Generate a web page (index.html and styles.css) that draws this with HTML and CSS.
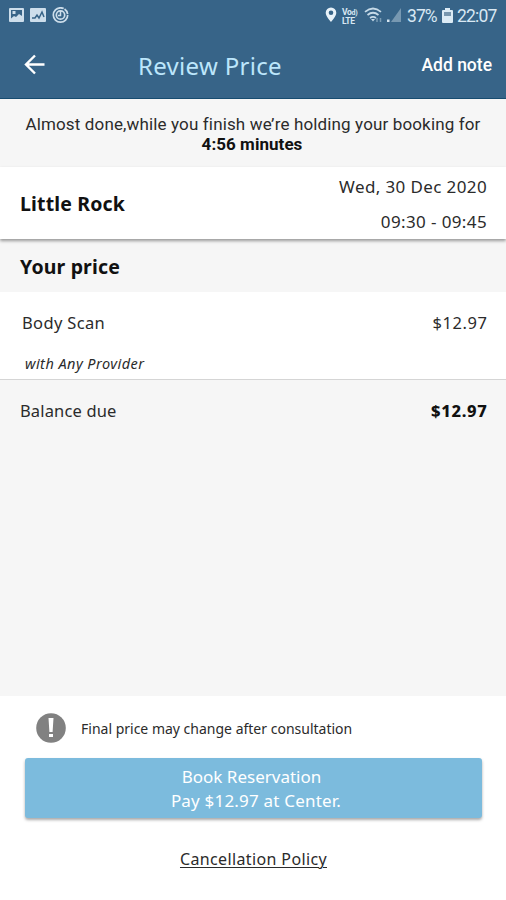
FILE: index.html
```html
<!DOCTYPE html>
<html lang="en">
<head>
<meta charset="utf-8">
<title>Review Price</title>
<link rel="stylesheet" href="styles.css">
</head>
<body>
<div class="screen">
  <header class="top">
    <div class="status">
      <svg class="status-left" width="62" height="20" viewBox="0 0 62 20">
        <rect x="1" y="1" width="15" height="14" rx="1" fill="#cddeeb"/>
        <path d="M3 3h11v6l-3 -2-3 3-2-1-3 2.500z" fill="#376488"/>
        <path d="M4.500 4h3v3h-3z" fill="#cddeeb"/>
        <rect x="22" y="1" width="16" height="14" rx="1" fill="#cddeeb"/>
        <path d="M24 11h3l2-3 2 3 3-6 2 5" fill="none" stroke="#376488" stroke-width="1.500"/>
        <circle cx="52.500" cy="8" r="7.200" fill="none" stroke="#cddeeb" stroke-width="1.700" stroke-dasharray="37 1 6 1.200"/>
        <circle cx="52.500" cy="8" r="4.200" fill="none" stroke="#cddeeb" stroke-width="1.700"/>
        <path d="M52.500 4v4.500h-2.500" fill="none" stroke="#cddeeb" stroke-width="1.500"/>
      </svg>
      <div class="status-right">
        <svg class="pin" width="12" height="16" viewBox="0 0 12 16"><path fill-rule="evenodd" d="M6 .5a5.300 5.300 0 0 0-5.300 5.300C.7 9.500 6 15 6 15s5.300-5.500 5.300-9.200A5.300 5.300 0 0 0 6 .5zM6 3.500a2.300 2.300 0 1 1 0 4.600 2.300 2.300 0 0 1 0-4.600z" fill="#e8f2f9"/></svg>
        <span class="volte"><span>Vo<span class="small">d)</span></span><span>LTE</span></span>
        <svg class="wifi" width="20" height="16" viewBox="0 0 20 16"><g fill="none" stroke="#c6dae8" stroke-width="1.700"><path d="M1 4.800Q9 -1.800 17 4.800M3.500 8Q9 3.500 14.500 8M6 11Q9 8.800 12 11"/></g><path d="M7 12h4l-2 2.500z" fill="#c6dae8"/><path d="M13 11v4M16.500 11v4" stroke="#799bb4" stroke-width="1.500"/></svg>
        <svg class="signal" width="16" height="16" viewBox="0 0 16 16"><path d="M5 15L15 1v14z" fill="#7798b1"/><path d="M1 15v-2.500h2.500V15z" fill="#d5e5f0"/></svg>
        <span class="percent">37%</span>
        <svg class="battery" width="11" height="16" viewBox="0 0 11 16"><path d="M3 0h5v2h2q1 0 1 1v11q0 1-1 1H1q-1 0-1-1V3q0-1 1-1h2z" fill="#dcebf5"/><path d="M2 4h7v4H2z" fill="#7896ae"/></svg>
        <span class="clock">22:07</span>
      </div>
    </div>
    <nav class="bar">
      <svg class="back" width="22" height="22" viewBox="0 0 22 22"><path d="M20.500 10.500H2M11 1.500l-9 9 9 9" fill="none" stroke="#fff" stroke-width="2.400"/></svg>
      <h1 class="title">Review Price</h1>
      <span class="add">Add note</span>
    </nav>
  </header>
  <section class="notice">
    <div class="notice-text">Almost done,while you finish we’re holding your booking for</div>
    <div class="notice-time">4:56 minutes</div>
  </section>
  <section class="place">
    <h2 class="heading place-name">Little Rock</h2>
    <div class="when"><span class="date">Wed, 30 Dec 2020</span><span class="time">09:30 - 09:45</span></div>
  </section>
  <h2 class="heading price-head">Your price</h2>
  <section class="item">
    <div class="row"><span class="name">Body Scan</span><span class="amount">$12.97</span></div>
    <div class="provider">with Any Provider</div>
  </section>
  <section class="row balance"><span class="due">Balance due</span><span class="total">$12.97</span></section>
  <footer class="footer">
    <div class="warning">
      <svg width="30" height="30" viewBox="0 0 30 30"><circle cx="15" cy="15" r="14.800" fill="#818181"/><path d="M12.500 5h5l-.9 14h-3.200zM13 21h4v3h-4z" fill="#fff"/></svg>
      <span class="warning-text">Final price may change after consultation</span>
    </div>
    <div class="book"><span class="book-a">Book Reservation</span><span class="book-b">Pay $12.97 at Center.</span></div>
    <div class="policy"><span class="policy-text">Cancellation Policy</span></div>
  </footer>
</div>
</body>
</html>
```
FILE: styles.css
```css
* { box-sizing: border-box; }
body { margin: 0; background: #f6f6f6; color: #2b2b2b; font-family: "Noto Sans", "Open Sans", sans-serif; }
h1, h2 { margin: 0; }
span, h1, h2, div { white-space: nowrap; }
.screen { width: 506px; height: 900px; display: flex; flex-direction: column; overflow: hidden; }
.top { height: 99px; background: #376488; border-bottom: 1px solid #174c70; flex: none; }
.status { height: 32px; display: flex; justify-content: space-between; padding: 7px 9px 0 8px; }
.status-right { display: flex; font-family: Roboto, sans-serif; color: #d9e8f3; font-size: 17.500px; line-height: 19px; }
.volte { display: flex; flex-direction: column; width: 16px; margin: 1px 6px 0 5px; font-size: 8.500px; line-height: 8px; font-weight: 700; letter-spacing: -.3px; }
.small { font-size: 7px; }
.signal { margin: 0 5px 0 2px; }
.percent { width: 30px; letter-spacing: -.9px; }
.battery { margin: 1px 4px 0 5px; }
.clock { width: 40px; letter-spacing: -.8px; }
.bar { height: 66px; display: flex; align-items: center; padding: 0 14px 0 24px; }
.title { margin-left: 92px; width: 146px; color: #bce6fb; font-size: 24px; font-weight: 400; line-height: 34px; letter-spacing: .3px; padding-top: 1px; }
.add { margin-left: auto; font: 500 17.500px/22px Roboto, sans-serif; color: #fff; }
.notice { height: 68px; padding-top: 15px; text-align: center; font: 17px/20px Roboto, sans-serif; letter-spacing: .14px; flex: none; }
.notice-time { font-weight: 700; color: #111; letter-spacing: .05px; padding-right: 2px; }
.place { height: 72px; display: flex; justify-content: space-between; padding: 8px 19px 0 20px; background: #fff; box-shadow: 0 2px 3px #999; flex: none; }
.heading { color: #111; font-size: 19.500px; font-weight: 700; line-height: 28px; letter-spacing: .15px; }
.place-name { margin-top: 15px; }
.when { display: flex; flex-direction: column; align-items: flex-end; font-size: 17px; line-height: 23px; gap: 12px; letter-spacing: .38px; }
.price-head { height: 53px; padding: 14px 20px 0; flex: none; }
.item { height: 88px; background: #fff; border-bottom: 1px solid #d5d5d5; padding: 19px 19px 0 22px; flex: none; }
.row { display: flex; justify-content: space-between; font-size: 16.500px; line-height: 24px; }
.name { letter-spacing: .35px; }
.due { letter-spacing: .15px; }
.amount, .total { letter-spacing: .6px; margin-right: -.6px; }
.provider { margin: 18px 0 0 3px; font-size: 14.500px; line-height: 20px; font-style: italic; letter-spacing: .45px; }
.balance { padding: 19px 19px 0 20px; }
.total { font-weight: 800; color: #111; letter-spacing: .7px; }
.footer { margin-top: auto; height: 204px; background: #fff; padding: 17px 24px 0 25px; }
.warning { display: flex; align-items: center; gap: 15px; height: 30px; padding-left: 11px; font-size: 14px; }
.book { height: 60px; margin-top: 15px; display: flex; flex-direction: column; align-items: center; padding-top: 7px; border-radius: 3px; background: #7cbbdd; color: #fff; box-shadow: 0 2px 3px #aaa; font-size: 17px; line-height: 23.500px; }
.book-a { margin-right: 4px; }
.book-b { letter-spacing: .2px; margin-left: 5px; }
.policy { display: flex; justify-content: center; margin-top: 29px; font-size: 16px; line-height: 24px; letter-spacing: .37px; }
.policy-text { text-decoration: underline; text-decoration-thickness: 1px; text-underline-offset: 2px; }
```
